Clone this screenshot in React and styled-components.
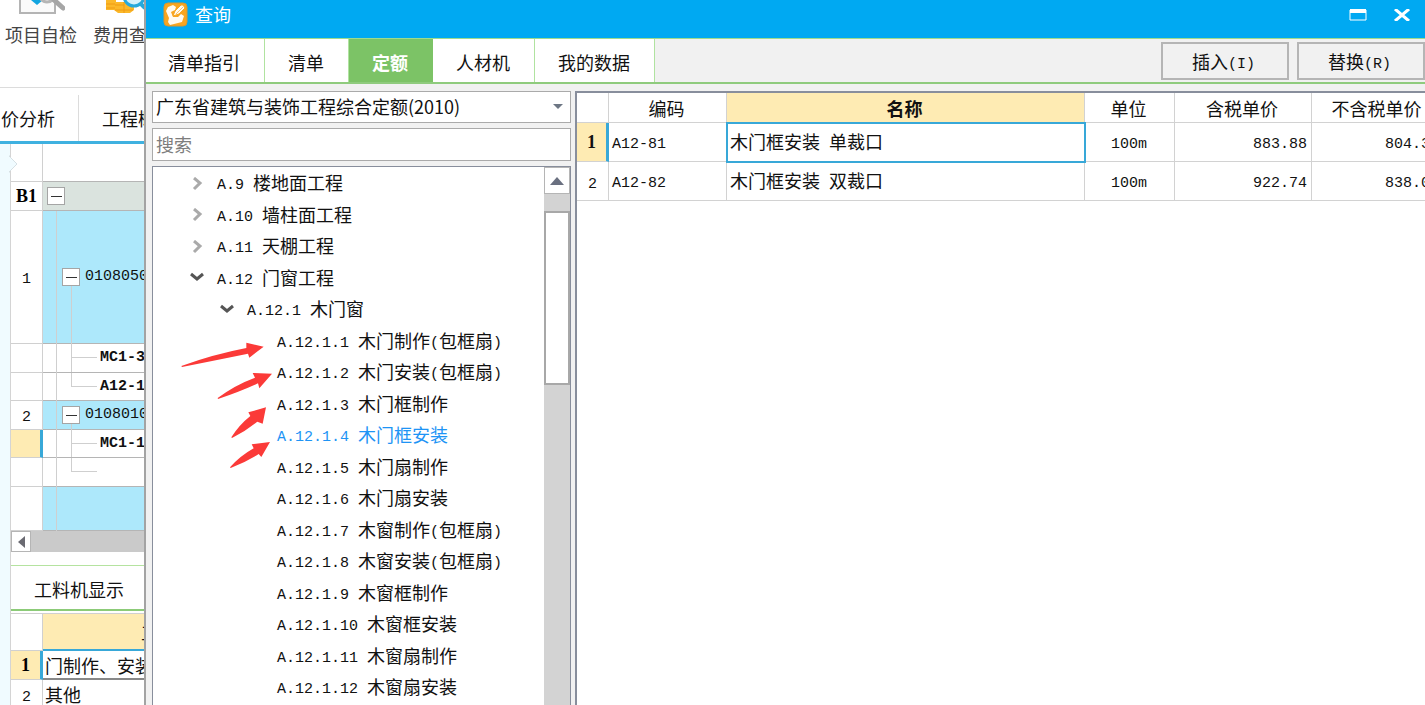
import React from 'react'
import styled, { createGlobalStyle, css } from 'styled-components'

const GlobalStyle = createGlobalStyle`
   *, *::before, *::after{
      box-sizing: border-box;
   }
   body{
      margin: 0;
      overflow: hidden;
      background: #fff;
      color: #111;
      font-family: 'Noto Sans CJK SC', sans-serif;
      font-size: 18px;
      line-height: 24px;
   }
   button, input, select{
      font: inherit;
      color: inherit;
      margin: 0;
      border-radius: 0;
   }
   table{
      border-collapse: separate;
      border-spacing: 0;
      table-layout: fixed;
   }
   th{
      font-weight: 400;
   }
`

const catalog = [
   { level: 1, state: 'closed', text: 'A.9 楼地面工程' },
   { level: 1, state: 'closed', text: 'A.10 墙柱面工程' },
   { level: 1, state: 'closed', text: 'A.11 天棚工程' },
   { level: 1, state: 'open', text: 'A.12 门窗工程' },
   { level: 2, state: 'open', text: 'A.12.1 木门窗' },
   { level: 3, text: 'A.12.1.1 木门制作(包框扇)' },
   { level: 3, text: 'A.12.1.2 木门安装(包框扇)' },
   { level: 3, text: 'A.12.1.3 木门框制作' },
   { level: 3, text: 'A.12.1.4 木门框安装', active: true },
   { level: 3, text: 'A.12.1.5 木门扇制作' },
   { level: 3, text: 'A.12.1.6 木门扇安装' },
   { level: 3, text: 'A.12.1.7 木窗制作(包框扇)' },
   { level: 3, text: 'A.12.1.8 木窗安装(包框扇)' },
   { level: 3, text: 'A.12.1.9 木窗框制作' },
   { level: 3, text: 'A.12.1.10 木窗框安装' },
   { level: 3, text: 'A.12.1.11 木窗扇制作' },
   { level: 3, text: 'A.12.1.12 木窗扇安装' },
]

const tabs = ['清单指引', '清单', '定额', '人材机', '我的数据']

const quotas = [
   { id: 1, code: 'A12-81', name: '木门框安装 单裁口', unit: '100m', taxed: '883.88', net: '804.35' },
   { id: 2, code: 'A12-82', name: '木门框安装 双裁口', unit: '100m', taxed: '922.74', net: '838.01' },
]

const items = [
   { id: 'r1', no: '1', h: 133, kind: 'parent', code: '0108050' },
   { id: 'r2', h: 29, kind: 'child', code: 'MC1-3' },
   { id: 'r3', h: 28, kind: 'last', code: 'A12-1' },
   { id: 'r4', no: '2', h: 29, kind: 'parent', code: '0108010' },
   { id: 'r5', h: 28, kind: 'child', code: 'MC1-1', current: true },
   { id: 'r6', h: 29, kind: 'last', code: '' },
   { id: 'r7', h: 44, kind: 'blank' },
]

// Latin runs are set in a narrower monospace face, half the width of a Chinese character
const Mixed = ({ text }) => text.split(/([\x20-\x7e]+)/).filter(Boolean).map((run, i) => (
   /^[\x20-\x7e]/.test(run) ? <Latin key={i}>{run}</Latin> : run
))

const CheckIcon = () => (
   <svg width="48" height="16" viewBox="0 0 48 16">
      <path d="M3 -4V13H38V-4" fill="#fafafa" stroke="#b4b4b4" strokeWidth="2" />
      <path d="M14 0L20 5L26 0Z" fill="#12a5e0" />
      <path d="M23 -2C27 3 32 3 37 -1" fill="none" stroke="#b5b5b5" strokeWidth="3" />
      <path d="M37 0L46 8" stroke="#a6a6a6" strokeWidth="5" strokeLinecap="round" />
   </svg>
)

const CoinIcon = () => (
   <svg width="48" height="16" viewBox="0 0 48 16">
      <path d="M2 0H12V2H30V10L26 13H14L10 10H2Z" fill="#fbb829" />
      <path d="M2 4H11M2 8H11M11 5H20M11 10H29M20 2V13" stroke="#f09a12" strokeWidth="1" />
      <circle cx="30" cy="-4" r="10" fill="#d5f1fb" stroke="#26a9dc" strokeWidth="3" />
      <path d="M36 3L41 8" stroke="#26a9dc" strokeWidth="4" />
   </svg>
)

const AppIcon = () => (
   <svg width="25" height="25" viewBox="0 0 25 25">
      <rect x="1" y="1" width="23" height="23" rx="4" fill="#f8a51f" stroke="#d9982e" />
      <path d="M3 9L5 5L10 3L13 5L12 8L8 10L10 15L15 15L18 12L21 14L19 20L7 23L5 20L6 16Z" fill="#fffaf0" />
      <path d="M10 14L12 9L18 3L20 3L22 6L16 12Z" fill="#fffaf0" stroke="#f8a51f" strokeWidth="1" />
      <path d="M13 12L20 5" stroke="#fac26c" strokeWidth="1" />
   </svg>
)

const Chevron = ({ open }) => (
   <svg width="14" height="14" viewBox="0 0 14 14" fill="none" strokeWidth="3">
      {open
         ? <path d="M1 3L7 8L13 3" stroke="#555" />
         : <path d="M4 1L10 6L4 12" stroke="#aaa" />}
   </svg>
)

const Arrows = () => (
   <Marks width="110" height="160" viewBox="0 0 330 480" fill="#fb3a38">
      <path d="M34 138Q130 103 229 84L229 68L281 80L238 113L234 101Q130 122 36 141Z" />
      <path d="M143 234Q195 195 255 173L248 159L306 161L268 205L264 190Q210 215 144 237Z" />
      <path d="M184 352Q207 315 241 288L235 277L288 262L278 311L262 305Q225 335 186 354Z" />
      <path d="M180 442Q210 408 251 385L245 373L300 366L274 411L266 402Q230 425 182 444Z" />
   </Marks>
)

const Workspace = () => (
   <WorkspaceStyled>
      <Ribbon>
         <RibbonButton $wide><CheckIcon />项目自检</RibbonButton>
         <RibbonButton><CoinIcon />费用查</RibbonButton>
      </Ribbon>
      <PageTabs>
         <PageTab $first>价分析</PageTab>
         <PageTab>工程概</PageTab>
      </PageTabs>
      <Split>
         <Rail>
            <svg width="9" height="18" viewBox="0 0 9 18">
               <path d="M0 0V1L8 9L0 17V18" fill="#f0fbff" stroke="#d6e0e4" />
            </svg>
         </Rail>
         <Sheets>
            <SheetTable>
               <colgroup><col width="32" /><col /></colgroup>
               <tbody>
                  <tr><NumCell $h={38} /><TreeCell $kind="head" /></tr>
                  <tr>
                     <NumCell as="th" $h={29} $strong>B1</NumCell>
                     <TreeCell $kind="root"><Node><Toggle aria-label="收起"><i /></Toggle></Node></TreeCell>
                  </tr>
                  {items.map(r => (
                     <tr key={r.id}>
                        <NumCell $h={r.h} $current={r.current}>{r.no && <Latin>{r.no}</Latin>}</NumCell>
                        <TreeCell $kind={r.kind}>
                           <Node>
                              {r.kind === 'parent' && <Toggle aria-label="收起"><i /></Toggle>}
                              {r.code && <Latin $dense={r.kind !== 'parent'}>{r.code}</Latin>}
                           </Node>
                        </TreeCell>
                     </tr>
                  ))}
               </tbody>
            </SheetTable>
            <HScroll>
               <ScrollButton aria-label="向左滚动">
                  <svg width="8" height="14" viewBox="0 0 8 14"><path d="M8 1V13L1 7Z" fill="#6a6a72" /></svg>
               </ScrollButton>
            </HScroll>
            <DetailTab>工料机显示</DetailTab>
            <DetailTable>
               <colgroup><col width="32" /><col /></colgroup>
               <thead>
                  <tr><NumCell $h={37} /><DetailHead>工</DetailHead></tr>
               </thead>
               <tbody>
                  <tr><NumCell as="th" $h={29} $current $strong>1</NumCell><DetailCell $current>门制作、安装</DetailCell></tr>
                  <tr><NumCell $h={29}><Latin>2</Latin></NumCell><DetailCell>其他</DetailCell></tr>
               </tbody>
            </DetailTable>
         </Sheets>
      </Split>
   </WorkspaceStyled>
)

const QueryDialog = () => (
   <Dialog role="dialog" aria-labelledby="query-title">
      <TitleBar>
         <AppIcon />
         <Title id="query-title">查询</Title>
         <WindowButton aria-label="最大化">
            <svg width="18" height="12" viewBox="0 0 18 12">
               <path d="M1 1H17V11H1Z" fill="none" stroke="#fff" strokeWidth="1" />
               <path d="M1 0H17V4H1Z" fill="#fff" />
            </svg>
         </WindowButton>
         <WindowButton aria-label="关闭">
            <svg width="18" height="12" viewBox="0 0 18 12">
               <path d="M2 0L16 12M16 0L2 12" stroke="#fff" strokeWidth="3" />
            </svg>
         </WindowButton>
      </TitleBar>
      <TabBar>
         {tabs.map(t => <Tab key={t} $active={t === '定额'}>{t}</Tab>)}
         <Actions>
            <ActionButton><Mixed text="插入(I)" /></ActionButton>
            <ActionButton><Mixed text="替换(R)" /></ActionButton>
         </Actions>
      </TabBar>
      <Body>
         <Side>
            <SelectBox>
               <select aria-label="定额库" defaultValue="gd2010">
                  <option value="gd2010">广东省建筑与装饰工程综合定额(2010)</option>
               </select>
               <svg width="10" height="6" viewBox="0 0 10 6"><path d="M0 0H10L5 5Z" fill="#6d7684" /></svg>
            </SelectBox>
            <Search type="text" placeholder="搜索" aria-label="搜索" />
            <TreePanel>
               <TreeList>
                  {catalog.map(c => (
                     <TreeItem key={c.text} $level={c.level} $active={c.active}>
                        <Handle>{c.state && <Chevron open={c.state === 'open'} />}</Handle>
                        <Label><Mixed text={c.text} /></Label>
                     </TreeItem>
                  ))}
               </TreeList>
               <VScroll>
                  <ScrollButton $up aria-label="向上滚动">
                     <svg width="14" height="8" viewBox="0 0 14 8"><path d="M7 0L14 8H0Z" fill="#6a7080" /></svg>
                  </ScrollButton>
                  <Thumb />
               </VScroll>
               <Arrows />
            </TreePanel>
         </Side>
         <Results>
            <ResultTable>
               <colgroup>
                  <col width="32" /><col width="118" /><col /><col width="90" /><col width="137" /><col width="132" />
               </colgroup>
               <thead>
                  <tr>
                     <HeadCell />
                     <HeadCell>编码</HeadCell>
                     <HeadCell $active>名称</HeadCell>
                     <HeadCell>单位</HeadCell>
                     <HeadCell>含税单价</HeadCell>
                     <HeadCell>不含税单价</HeadCell>
                  </tr>
               </thead>
               <tbody>
                  {quotas.map(q => {
                     const current = q.id === 1
                     return (
                        <tr key={q.id}>
                           <IndexCell $current={current}>{current ? q.id : <Latin>{q.id}</Latin>}</IndexCell>
                           <Cell><Mixed text={q.code} /></Cell>
                           <Cell $current={current}><Mixed text={q.name} /></Cell>
                           <Cell $align="center"><Mixed text={q.unit} /></Cell>
                           <Cell $align="right"><Mixed text={q.taxed} /></Cell>
                           <Cell $align="right"><Mixed text={q.net} /></Cell>
                        </tr>
                     )
                  })}
               </tbody>
            </ResultTable>
         </Results>
      </Body>
   </Dialog>
)

const App = () => {
   return (
      <Desktop>
         <GlobalStyle />
         <Workspace />
         <QueryDialog />
      </Desktop>
   )
}

const Desktop = styled.div`
   display: flex;
   height: 100vh;
   overflow: hidden;
   white-space: nowrap;
`
const Latin = styled.span`
   font-family: 'Liberation Mono', monospace;
   font-size: 15px;
   line-height: 16px;
   vertical-align: 1px;
   white-space: pre;
   font-weight: ${p => p.$dense ? 700 : 400};
`
const WorkspaceStyled = styled.div`
   flex: 0 0 144px;
   display: flex;
   flex-direction: column;
   overflow: hidden;
`
const Ribbon = styled.div`
   display: flex;
   flex: 0 0 88px;
   border-bottom: 1px solid #dcdcdc;
   padding-left: 5px;
   gap: 16px;
`
const RibbonButton = styled.button`
   display: flex;
   flex-direction: column;
   flex: none;
   align-items: ${p => p.$wide ? 'center' : 'flex-start'};
   gap: 6px;
   padding: 0;
   border: 0;
   background: none;
   color: #444;
   svg{
      margin-left: ${p => p.$wide ? 0 : '11px'};
   }
`
const PageTabs = styled.div`
   display: flex;
   flex: 0 0 56px;
   padding-top: 7px;
   border-bottom: 3px solid #3fb1e0;
`
const PageTab = styled.button`
   flex: none;
   padding: 0 23px;
   border: 0;
   background: none;
   ${p => p.$first && css`
      padding-left: 1px;
      border-right: 1px solid #dcdcdc;
   `}
`
const Split = styled.div`
   display: flex;
   flex: 1;
   min-height: 0;
`
const Rail = styled.div`
   flex: 0 0 10px;
   background: #f0fbff;
   padding-top: 11px;
   position: relative;
   svg{
      position: absolute;
      left: 9px;
      z-index: 1;
   }
`
const Sheets = styled.div`
   flex: 1;
   min-width: 0;
   border-left: 1px solid #d4d4d4;
   overflow: hidden;
`
const SheetTable = styled.table`
   width: 240px;
   line-height: 18px;
`
const NumCell = styled.td`
   height: ${p => p.$h}px;
   padding: 0;
   text-align: center;
   border-right: 1px solid #d0d0d0;
   border-bottom: 1px solid #d0d0d0;
   ${p => p.$strong && css`
      font-family: 'Liberation Serif', serif;
      font-weight: 700;
      color: #000;
   `}
   ${p => p.$current && css`
      background: #feebb3;
      border-right: 3px solid #38a8d8;
   `}
`
const tint = { head: '#fff', root: '#dae3de', parent: '#ade8fb', blank: '#ade8fb' }
const TreeCell = styled.td`
   position: relative;
   padding: 0 0 0 4px;
   border-bottom: 1px solid #b5b5b5;
   background: ${p => tint[p.$kind] || '#fff'};
   ${p => p.$kind === 'parent' && 'padding-left: 19px;'}
   ${p => (p.$kind === 'child' || p.$kind === 'last') && 'padding-left: 57px;'}
   ${p => !['head', 'root'].includes(p.$kind) && css`
      &::before{
         content: '';
         position: absolute;
         left: 13px;
         top: 0;
         bottom: -1px;
         border-left: 1px solid #cfcfcf;
      }
   `}
   ${p => p.$kind === 'parent' && css`
      &::after{
         content: '';
         position: absolute;
         left: 28px;
         top: calc(50% + 9px);
         bottom: -1px;
         border-left: 1px solid #cfcfcf;
      }
   `}
   ${p => (p.$kind === 'child' || p.$kind === 'last') && css`
      &::after{
         content: '';
         position: absolute;
         left: 28px;
         top: 0;
         height: 50%;
         width: 26px;
         border-left: 1px solid #cfcfcf;
         border-bottom: 1px solid #cfcfcf;
      }
   `}
   ${p => p.$kind === 'child' && css`
      background: linear-gradient(#cfcfcf, #cfcfcf) 28px 0 / 1px 100% no-repeat #fff;
   `}
`
const Node = styled.div`
   display: flex;
   align-items: center;
   gap: 5px;
`
const Toggle = styled.button`
   display: flex;
   align-items: center;
   justify-content: center;
   width: 18px;
   height: 18px;
   padding: 0;
   border: 1px solid #a5a5a5;
   background: #fff;
   i{
      width: 11px;
      height: 1px;
      background: #333;
   }
`
const HScroll = styled.div`
   display: flex;
   height: 21px;
   background: #cacaca;
`
const ScrollButton = styled.button`
   display: flex;
   align-items: center;
   justify-content: center;
   width: ${p => p.$up ? '100%' : '20px'};
   height: ${p => p.$up ? '27px' : '100%'};
   padding: 0;
   border: 1px solid #b5b5b5;
   background: #fff;
`
const DetailTab = styled.button`
   display: block;
   width: 100%;
   height: 46px;
   margin: 13px 0 2px;
   padding: 2px 0 0 23px;
   text-align: left;
   background: #fff;
   border: 0;
   border-top: 1px solid #b5e3a0;
   border-bottom: 2px solid #8ccb78;
`
const DetailTable = styled.table`
   width: 240px;
   border-top: 1px solid #d0d0d0;
`
const DetailHead = styled.th`
   padding: 0 0 0 98px;
   text-align: left;
   background: #feebb3;
   border-bottom: 2px solid #38a8d8;
`
const DetailCell = styled.td`
   padding: 0 2px;
   border-bottom: ${p => p.$current ? '2px solid #888' : '1px solid #d0d0d0'};
`
const Dialog = styled.div`
   flex: 1;
   min-width: 0;
   display: flex;
   flex-direction: column;
   border-left: 2px solid #a3a3a3;
   background: #f1f1f1;
`
const TitleBar = styled.div`
   display: flex;
   align-items: flex-start;
   flex: 0 0 38px;
   gap: 7px;
   padding: 2px 14px 0 17px;
   background: #00a9f2;
   color: #fff;
`
const Title = styled.div`
   flex: 1;
`
const WindowButton = styled.button`
   padding: 0;
   margin-left: 19px;
   border: 0;
   background: none;
   line-height: 12px;
   height: 24px;
`
const TabBar = styled.div`
   display: flex;
   flex: 0 0 46px;
   border-top: 1px solid #9edb8e;
   border-bottom: 2px solid #8fcb7d;
`
const Tab = styled.button`
   padding: 2px 24px 0 23px;
   border: 0;
   border-right: 1px solid #b0e3a0;
   background: #fff;
   ${p => p.$active && css`
      background: #7cc366;
      border-color: #7cc366;
      color: #fff;
      font-weight: 700;
   `}
   &:first-child{
      padding-left: 22px;
   }
`
const Actions = styled.div`
   display: flex;
   gap: 8px;
   margin-left: auto;
   padding: 3px 0 2px;
`
const ActionButton = styled.button`
   width: 128px;
   padding: 0 3px 0 0;
   border: 2px solid #b5b5b5;
   background: #f1f1f1;
`
const Body = styled.div`
   display: flex;
   flex: 1;
   min-height: 0;
   gap: 4px;
   padding: 7px 0 0 6px;
`
const Side = styled.div`
   flex: 0 0 419px;
   display: flex;
   flex-direction: column;
   gap: 5px;
`
const SelectBox = styled.label`
   display: flex;
   align-items: center;
   height: 32px;
   padding-right: 7px;
   border: 1px solid #aaa;
   background: #fff;
   select{
      flex: 1;
      appearance: none;
      padding: 0 3px 2px;
      border: 0;
      background: none;
      outline: none;
   }
`
const Search = styled.input`
   height: 33px;
   padding: 0 3px 2px;
   border: 1px solid #aaa;
   background: #fff;
   &::placeholder{
      color: #7d7d7d;
      opacity: 1;
   }
`
const TreePanel = styled.div`
   position: relative;
   flex: 1;
   min-height: 0;
   display: flex;
   overflow: hidden;
   border: 1px solid #888e9c;
   border-bottom: 0;
   background: #fff;
`
const TreeList = styled.ul`
   flex: 1;
   margin: 0;
   padding: 1px 0 0;
   list-style: none;
`
const TreeItem = styled.li`
   display: flex;
   align-items: center;
   height: 31px;
   padding-left: ${p => p.$level * 30 + 7}px;
   color: ${p => p.$active ? '#1e94f5' : 'inherit'};
   &:nth-child(even){
      height: 32px;
   }
`
const Handle = styled.span`
   display: flex;
   flex: 0 0 27px;
`
const Label = styled.span`
   padding-bottom: 3px;
`
const VScroll = styled.div`
   width: 26px;
   background: #d3d3d3;
`
const Thumb = styled.div`
   height: 174px;
   margin-top: 17px;
   border: 2px solid #a8a8a8;
   background: #fff;
`
const Marks = styled.svg`
   position: absolute;
   left: 17px;
   top: 153px;
   pointer-events: none;
`
const Results = styled.div`
   flex: 1;
   min-width: 0;
   overflow: hidden;
   border-left: 2px solid #888e9c;
   border-top: 2px solid #888e9c;
   background: #fff;
`
const ResultTable = styled.table`
   width: calc(100% + 19px);
`
const HeadCell = styled.th`
   height: 30px;
   padding: 0 2px 0 0;
   border-right: 1px solid #d2d2d2;
   border-bottom: 1px solid #d2d2d2;
   ${p => p.$active && css`
      background: #feebb3;
      font-weight: 700;
      border-bottom-color: #38a8d8;
   `}
`
const Cell = styled.td`
   height: 39px;
   padding: 0 4px 2px 3px;
   text-align: ${p => p.$align || 'left'};
   border-right: 1px solid #d2d2d2;
   border-bottom: 1px solid #d2d2d2;
   ${p => p.$current && css`
      outline: 2px solid #38a8d8;
      outline-offset: -1px;
   `}
`
const IndexCell = styled(Cell)`
   padding: 0;
   text-align: center;
   ${p => p.$current && css`
      outline: 0;
      background: #feebb3;
      border-right: 3px solid #38a8d8;
      font-family: 'Liberation Serif', serif;
      font-weight: 700;
   `}
`

export default App
